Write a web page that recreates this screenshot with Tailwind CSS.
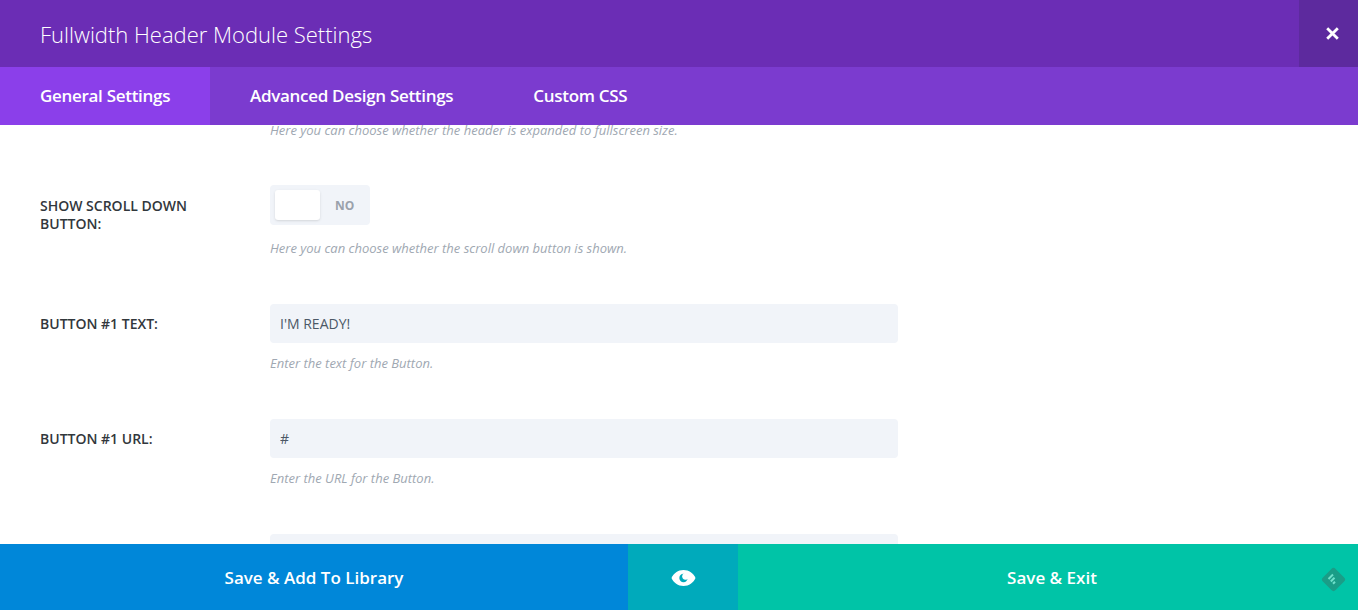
<!DOCTYPE html>
<html lang="en">
<head>
  <meta charset="UTF-8">
  <meta name="viewport" content="width=device-width, initial-scale=1.0">
  <title>Fullwidth Header Module Settings</title>
  <script src="https://cdn.jsdelivr.net/npm/@tailwindcss/browser@4"></script>
</head>
<body class="h-screen overflow-hidden flex flex-col bg-white font-['Open_Sans',sans-serif]">
  <!-- Title bar -->
  <header class="h-[67px] shrink-0 flex items-center justify-between bg-[#6b2db5]">
    <h1 class="pl-10 pt-[2px] text-[22px] font-light text-white">Fullwidth Header Module Settings</h1>
    <button class="w-[59px] h-full pl-[8px] flex items-center justify-center bg-[#5d2a9e]">
      <svg width="13" height="13" viewBox="0 0 13 13" fill="none" stroke="white" stroke-width="2.8">
        <path d="M1.2 1.2 11.800 11.800M11.800 1.200 1.200 11.800"/>
      </svg>
    </button>
  </header>

  <!-- Tabs -->
  <nav class="h-[58px] shrink-0 flex bg-[#7b3bcf] text-[17px] font-semibold text-white">
    <a href="#" class="w-[210px] pl-10 flex items-center bg-[#8b3fea] tracking-[-0.3px]">General Settings</a>
    <a href="#" class="ml-10 flex items-center tracking-[-0.3px]">Advanced Design Settings</a>
    <a href="#" class="ml-20 flex items-center tracking-[-0.3px]">Custom CSS</a>
  </nav>

  <!-- Settings -->
  <main class="flex-1 min-h-0 overflow-hidden pl-10 text-[14px] text-[#32373c]">
    <p class="ml-[230px] -mt-[4px] h-[18px] leading-[18px] text-[13px] italic text-[#a0a8b2]">Here you can choose whether the header is expanded to fullscreen size.</p>

    <div class="mt-[46px] flex">
      <label class="w-[230px] pt-[12px] pr-[40px] leading-[18px] font-semibold uppercase">Show Scroll Down Button:</label>
      <div>
        <div class="w-[100px] h-[40px] p-[5px] flex items-center rounded-[4px] bg-[#f1f4f9]">
          <span class="w-[45px] h-[30px] rounded-[3px] bg-white shadow-sm"></span>
          <span class="ml-[15px] pt-[1px] text-[12px] font-bold text-[#9aa1ab]">NO</span>
        </div>
        <p class="mt-[14px] h-[18px] leading-[18px] text-[13px] italic text-[#a0a8b2]">Here you can choose whether the scroll down button is shown.</p>
      </div>
    </div>

    <div class="mt-[47px] flex">
      <label class="w-[230px] pt-[10px] leading-[19px] font-semibold uppercase">Button #1 Text:</label>
      <div>
        <input type="text" value="I'M READY!" class="block w-[628px] h-[39px] px-[10px] rounded-[4px] bg-[#f1f4f9] text-[14px] text-[#4c5866]">
        <p class="mt-[11px] h-[18px] leading-[18px] text-[13px] italic text-[#a0a8b2]">Enter the text for the Button.</p>
      </div>
    </div>

    <div class="mt-[47px] flex">
      <label class="w-[230px] pt-[10px] leading-[19px] font-semibold uppercase">Button #1 URL:</label>
      <div>
        <input type="text" value="#" class="block w-[628px] h-[39px] px-[10px] rounded-[4px] bg-[#f1f4f9] text-[14px] text-[#4c5866]">
        <p class="mt-[11px] h-[18px] leading-[18px] text-[13px] italic text-[#a0a8b2]">Enter the URL for the Button.</p>
      </div>
    </div>

    <div class="mt-[47px] ml-[230px] w-[628px] h-[39px] rounded-[4px] bg-[#f1f4f9]"></div>
  </main>

  <!-- Footer actions -->
  <footer class="relative h-[66px] shrink-0 flex text-[17px] font-semibold text-white">
    <button class="w-[628px] pt-[2px] bg-[#0087d9]">Save &amp; Add To Library</button>
    <button class="w-[110px] pt-[2px] flex items-center justify-center bg-[#00aabb]">
      <svg width="25" height="16" viewBox="0 0 25 16">
        <path fill="white" d="M12.5 0C18 0 22.5 3.5 24.5 8 22.5 12.500 18 16 12.500 16 7 16 2.500 12.500 .5 8 2.500 3.500 7 0 12.500 0Z"/>
        <circle cx="12.500" cy="8" r="4.200" fill="#00aabb"/>
        <circle cx="14.600" cy="6.300" r="3.400" fill="white"/>
      </svg>
    </button>
    <button class="flex-1 pt-[2px] pl-[8px] bg-[#00c4a7]">Save &amp; Exit</button>
    <!-- Feedly-style badge sitting over the button -->
    <svg class="absolute left-[1321px] top-[23px]" width="25" height="25" viewBox="0 0 25 25">
      <rect x="3.500" y="3.500" width="18" height="18" rx="3" transform="rotate(45 12.500 12.500)" fill="#1a9d87"/>
      <path d="M7.500 12 12 7.500M9.800 14.500 13.500 10.800M12 16.800 14 14.800" stroke="#6fe0ca" stroke-width="2" fill="none"/>
    </svg>
  </footer>
</body>
</html>
